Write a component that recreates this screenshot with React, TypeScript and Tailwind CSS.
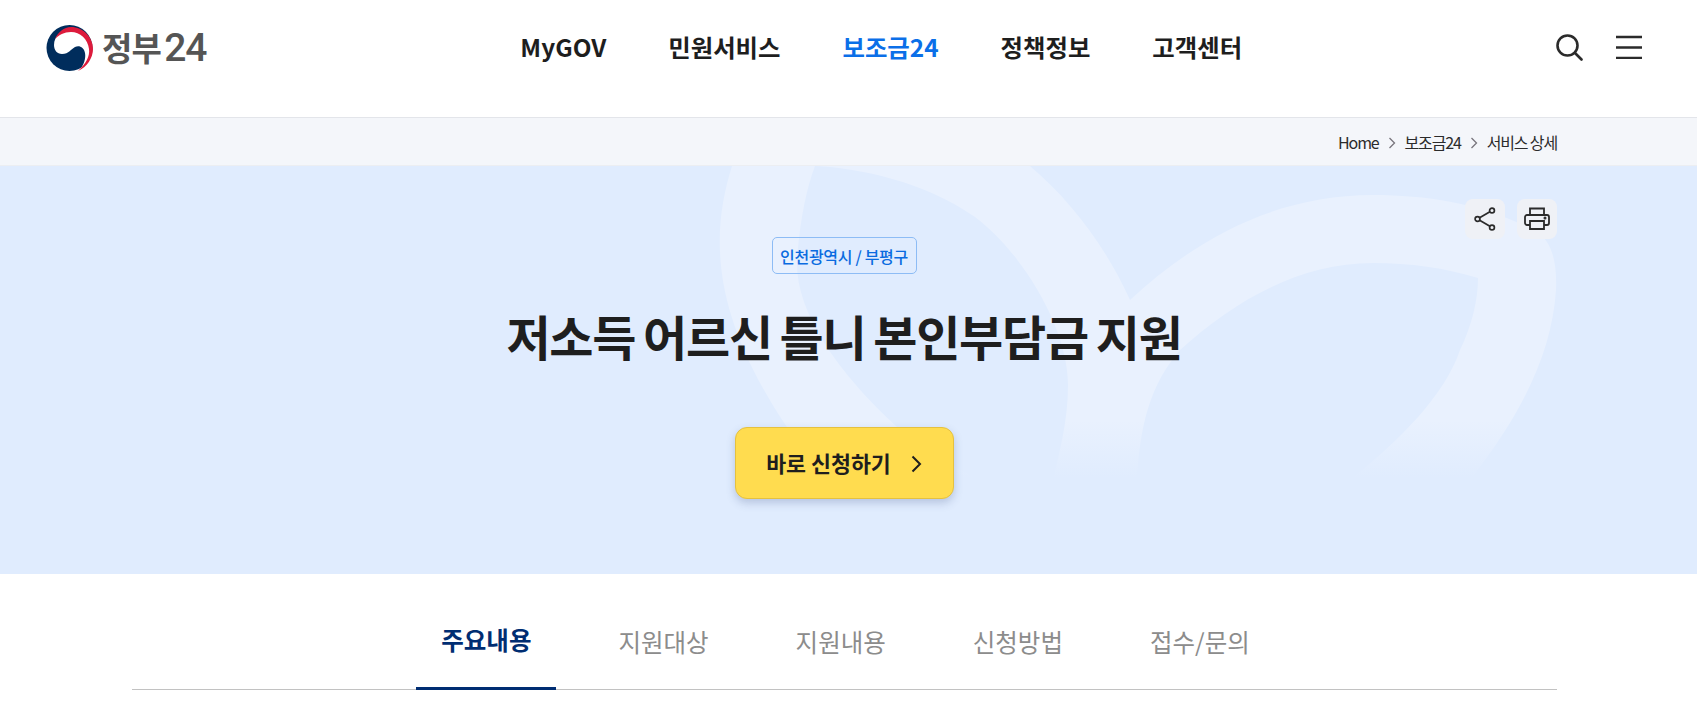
import React from 'react';

const navItems = ['MyGOV', '민원서비스', '보조금24', '정책정보', '고객센터'];
const tabs = ['주요내용', '지원대상', '지원내용', '신청방법', '접수/문의'];

const Logo = () => (
  <svg width="47" height="46" viewBox="0 0 47 46" className="shrink-0">
    <circle cx="23.5" cy="23" r="23" fill="#002d5c" />
    <path
      d="M8 20C8 11 16 5 25 5C36 5 45 14 45 24C45 33 40 40 33 46C38 40 40 33 39 28C38 22 33 20 29 22C25 24 23 29 16 29C11 29 8 25 8 20Z"
      fill="#ffffff"
    />
    <path
      d="M9 14C12 7 18 2 25 2C37 2 47 12 47 24C47 33 41 42 32 46C40 39 44 31 43 24C42 14 34 7 25 7C18 7 13 10 9 14Z"
      fill="#dd1b3c"
    />
  </svg>
);

const HeroBackdrop = () => (
  <svg viewBox="0 166 1697 408" className="absolute inset-0 w-full h-full" aria-hidden="true">
    <defs>
      <linearGradient id="fade" gradientUnits="userSpaceOnUse" x1="0" y1="420" x2="0" y2="478">
        <stop offset="0" stopColor="#e9f1fe" />
        <stop offset="1" stopColor="#e9f1fe" stopOpacity="0" />
      </linearGradient>
    </defs>
    <path
      fillRule="evenodd"
      fill="url(#fade)"
      d="M732 166C712 230 708 310 787 427C805 452 825 468 845 480L1470 480C1525 410 1552 350 1556 290C1557 265 1553 245 1540 234C1490 205 1430 195 1373 195C1280 195 1200 235 1130 300C1105 245 1070 200 1030 166Z
         M815 166C860 168 925 182 975 217C1025 255 1068 330 1068 385C1068 420 1060 450 1053 480L980 480C950 465 925 450 897 427C835 370 795 310 797 260C800 220 806 190 815 166Z
         M1478 278C1445 268 1410 263 1373 263C1300 263 1235 300 1180 350C1150 385 1140 425 1137 480L1350 480C1400 440 1445 395 1460 350C1472 325 1478 300 1478 278Z"
    />
  </svg>
);

export default function App() {
  return (
    <div className="min-h-[722px] bg-white text-[#1e1e1e] font-['Noto_Sans_CJK_KR','Noto_Sans',sans-serif]">
      {/* Header */}
      <header className="h-[118px] border-b border-[#e3e5ea] flex items-start justify-between pl-[46px] pr-[55px] pt-[25px]">
        <div className="flex items-start gap-[9px] h-[46px]">
          <Logo />
          <span className="flex items-baseline gap-[3px] leading-[44px] text-[#555555]">
            <span className="text-[33px] font-bold tracking-[-0.8px]">정부</span>
            <span className="text-[39px] font-medium font-['Roboto',sans-serif] tracking-[-1px]">24</span>
          </span>
        </div>
        <nav className="flex gap-[62px] h-[44px] items-center">
          {navItems.map((item) => (
            <a
              key={item}
              className={`text-[24.4px] leading-none font-bold ${item === '보조금24' ? 'text-[#0b6fe8]' : 'text-[#1e1e1e]'}`}
            >
              {item}
            </a>
          ))}
        </nav>
        <div className="flex items-center gap-[33px] h-[44px]">
          <svg width="27" height="27" viewBox="0 0 27 27" fill="none" stroke="#2b2b2b" strokeWidth="2.6" strokeLinecap="round">
            <circle cx="11.5" cy="11.5" r="10" />
            <path d="M19 19L25.5 25.5" />
          </svg>
          <svg width="26" height="24" viewBox="0 0 26 24" fill="none" stroke="#2b2b2b" strokeWidth="2.4">
            <path d="M0 2H26M0 12.5H26M0 23H26" />
          </svg>
        </div>
      </header>

      {/* Breadcrumb */}
      <div className="h-[48px] bg-[#f4f6fa] border-b border-[#eceef2] flex items-center justify-end pr-[140px] text-[16px] tracking-[-1.15px] text-[#2b2b2b]">
        <span>Home</span>
        <svg width="8" height="12" viewBox="0 0 8 12" fill="none" stroke="#77757c" strokeWidth="1.3" className="mx-[9px] mt-[2px]">
          <path d="M1.5 1L6.5 6L1.5 11" />
        </svg>
        <span>보조금24</span>
        <svg width="8" height="12" viewBox="0 0 8 12" fill="none" stroke="#77757c" strokeWidth="1.3" className="mx-[9px] mt-[2px]">
          <path d="M1.5 1L6.5 6L1.5 11" />
        </svg>
        <span>서비스 상세</span>
      </div>

      {/* Hero */}
      <section className="relative h-[408px] bg-[#e0ecfe] overflow-hidden flex flex-col items-center pt-[71px] pr-[9px]">
        <HeroBackdrop />
        <div className="absolute top-[33px] right-[140px] flex gap-[12px]">
          <button className="w-[40px] h-[40px] rounded-[8px] bg-[#eff1f6] flex items-center justify-center">
            <svg width="22" height="24" viewBox="0 0 22 24" fill="none" stroke="#2b2b2b" strokeWidth="1.7">
              <circle cx="3.5" cy="12" r="2.4" />
              <circle cx="18" cy="3.5" r="2.4" />
              <circle cx="18" cy="20.5" r="2.4" />
              <path d="M5.6 10.8L15.9 4.7M5.6 13.2L15.9 19.3" />
            </svg>
          </button>
          <button className="w-[40px] h-[40px] rounded-[8px] bg-[#eff1f6] flex items-center justify-center">
            <svg width="26" height="24" viewBox="0 0 26 24" fill="none" stroke="#2b2b2b" strokeWidth="1.8">
              <path d="M6 8V1.5H20V8" />
              <path d="M6 18H3C2 18 1 17 1 16V10C1 9 2 8 3 8H23C24 8 25 9 25 10V16C25 17 24 18 23 18H20" />
              <path d="M6 14H20V22H6Z" />
              <circle cx="21" cy="11" r="0.6" fill="#2b2b2b" />
            </svg>
          </button>
        </div>
        <span className="relative h-[37px] w-[145px] flex items-center justify-center whitespace-nowrap rounded-[5px] border border-[#8dbcf5] text-[#0a6be0] text-[16px] font-medium tracking-[-0.3px]">
          인천광역시 / 부평구
        </span>
        <h1 className="relative mt-[30px] text-[48px] leading-[62px] font-bold text-[#1e1e1e] tracking-[-1.2px] [word-spacing:-2px]">
          저소득 어르신 틀니 본인부담금 지원
        </h1>
        <a className="relative mt-[61px] w-[219px] h-[72px] pt-[1px] rounded-[12px] bg-[#ffdc4f] border border-[#e5c13f] shadow-[0_4px_8px_rgba(60,80,130,0.25)] flex items-center justify-center gap-[20px]">
          <span className="text-[21.7px] font-bold text-[#1e1e1e]">바로 신청하기</span>
          <svg width="11" height="18" viewBox="0 0 11 18" fill="none" stroke="#1e1e1e" strokeWidth="2">
            <path d="M1.5 1.5L9 9L1.5 16.5" />
          </svg>
        </a>
      </section>

      {/* Tabs */}
      <div className="pl-[132px] pr-[140px]">
        <ul className="h-[116px] border-b border-[#c2c2c2] flex justify-center items-end gap-[37px] pl-[2px]">
          {tabs.map((tab, i) => (
            <li
              key={tab}
              className={`-mb-px px-[25px] h-[66px] pb-[30px] flex items-center text-[24.5px] ${
                i === 0
                  ? 'font-bold text-[#002d72] border-b-[3px] border-[#002d72]'
                  : 'font-normal text-[#8c8c8c]'
              }`}
            >
              {tab}
            </li>
          ))}
        </ul>
      </div>
    </div>
  );
}
